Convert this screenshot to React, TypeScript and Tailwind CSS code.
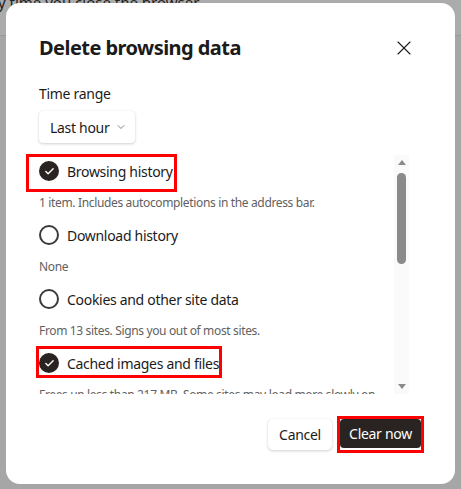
import { Check, ChevronDown, X } from "lucide-react";

interface ItemProps {
  label: string;
  desc: string;
  checked?: boolean;
}

const Item = ({ label, desc, checked }: ItemProps) => {
  return (
    <div className="mb-[8px]">
      <div className="flex h-[32px] items-center gap-[8px]">
        {checked ? (
          <span className="flex h-[20px] w-[20px] items-center justify-center rounded-full bg-[#292421]">
            <Check className="h-[11px] w-[11px] text-white" strokeWidth={3} />
          </span>
        ) : (
          <span className="h-[20px] w-[20px] rounded-full border-2 border-[#3b3b3b]" />
        )}
        <span className="text-[14px] tracking-[-0.3px] text-[#1b1b1b]">{label}</span>
      </div>
      <p className="mt-[7px] pr-[10px] text-[12px] leading-[17px] tracking-[-0.35px] text-[#616161]">
        {desc}
      </p>
    </div>
  );
};

export default function App() {
  return (
    <div
      className="relative h-[489px] w-[461px] overflow-hidden bg-[#a6a6a6] px-[6px] pt-[3px]"
      style={{ fontFamily: '"Noto Sans", "Open Sans", sans-serif' }}
    >
      {/* page behind the dialog */}
      <div className="absolute inset-x-0 top-0 h-[36px] border-b border-[#999] bg-[#ababab]">
        <p className="-mt-[9px] ml-[-2px] text-[15px] text-[#222]">
          y time you close the browser
        </p>
      </div>

      <div className="relative flex h-[481px] flex-col rounded-[14px] bg-white pl-[33px] pr-[52px] pt-[31px]">
        <div className="flex items-center justify-between">
          <h2 className="text-[20px] font-bold leading-[28px] tracking-[-0.55px] text-[#1b1b1b]">
            Delete browsing data
          </h2>
          <X className="mr-[-13px] h-[24px] w-[24px] text-[#1b1b1b]" strokeWidth={1.1} />
        </div>

        <p className="mt-[22px] text-[14px] leading-[20px] tracking-[-0.3px] text-[#1b1b1b]">
          Time range
        </p>
        <button className="mt-[7px] flex h-[32px] w-[96px] items-center gap-[6px] whitespace-nowrap rounded-[4px] bg-white pl-[11px] text-[14px] tracking-[-0.3px] text-[#1b1b1b] shadow-[0_1px_3px_rgba(0,0,0,0.18),0_0_1px_rgba(0,0,0,0.1)]">
          Last hour
          <ChevronDown className="h-[12px] w-[12px] text-[#616161]" strokeWidth={1.5} />
        </button>

        <div className="relative mt-[12px] flex h-[239px] -mr-[6px]">
          <div className="flex-1 overflow-hidden">
            <Item
              checked
              label="Browsing history"
              desc="1 item. Includes autocompletions in the address bar."
            />
            <Item label="Download history" desc="None" />
            <Item
              label="Cookies and other site data"
              desc="From 13 sites. Signs you out of most sites."
            />
            <Item
              checked
              label="Cached images and files"
              desc="Frees up less than 217 MB. Some sites may load more slowly on your next visit."
            />
          </div>

          {/* scrollbar */}
          <div className="flex w-[15px] flex-col items-center bg-[#fafafa] py-[5px]">
            <span className="h-0 w-0 border-x-[4px] border-b-[5px] border-x-transparent border-b-[#8a8a8a]" />
            <span className="mt-[8px] h-[91px] w-[9px] rounded-full bg-[#8a8a8a]" />
            <span className="flex-1" />
            <span className="h-0 w-0 border-x-[4px] border-t-[5px] border-x-transparent border-t-[#8a8a8a]" />
          </div>

          {/* annotation boxes */}
          <span className="pointer-events-none absolute left-[-13px] top-[-1px] h-[38px] w-[151px] border-[3px] border-[#ff0000]" />
          <span className="pointer-events-none absolute left-[-3px] top-[191px] h-[32px] w-[186px] border-[3px] border-[#ff0000]" />
        </div>

        <div className="mt-auto mb-[34px] flex justify-end gap-[8px] mr-[-18px]">
          <button className="h-[31px] w-[64px] rounded-[5px] bg-white text-[14px] tracking-[-0.3px] text-[#1b1b1b] shadow-[0_1px_3px_rgba(0,0,0,0.18),0_0_1px_rgba(0,0,0,0.1)]">
            Cancel
          </button>
          <span className="-m-[3px] border-[3px] border-[#ff0000]">
            <button className="block h-[29px] w-[81px] rounded-[4px] bg-[#292421] text-[14px] tracking-[-0.3px] text-white">
              Clear now
            </button>
          </span>
        </div>
      </div>
    </div>
  );
}
